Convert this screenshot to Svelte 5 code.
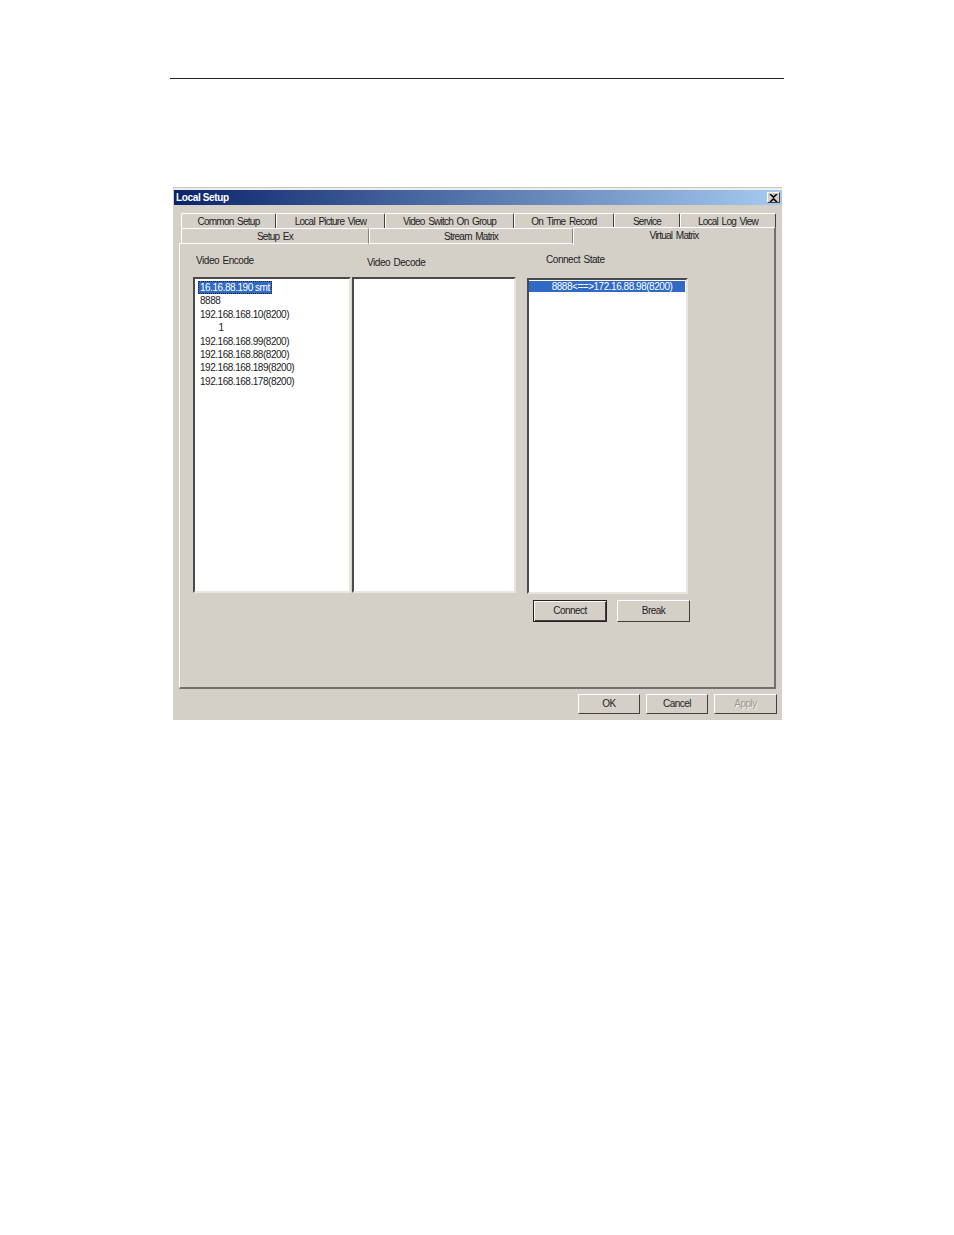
<script>
  const topTabs = [
    { label: "Common Setup", width: 95 },
    { label: "Local Picture View", width: 109 },
    { label: "Video Switch On Group", width: 129 },
    { label: "On Time Record", width: 100 },
    { label: "Service", width: 66 },
    { label: "Local Log View", width: 96 }
  ];
  const encoders = [
    "8888",
    "192.168.168.10(8200)",
    "        1",
    "192.168.168.99(8200)",
    "192.168.168.88(8200)",
    "192.168.168.189(8200)",
    "192.168.168.178(8200)"
  ];
</script>

<main class="page">
  <div class="rule"></div>

  <section class="dialog">
    <header class="titlebar">
      <span>Local Setup</span>
      <button class="close" aria-label="Close">
        <svg width="9" height="8" viewBox="0 0 9 8">
          <path d="M1 0 4.5 3.2 8 0M1 8 4.5 4.8 8 8" fill="none" stroke="#000" stroke-width="1.6" />
        </svg>
      </button>
    </header>

    <div class="tabs">
      <div class="tab-row">
        {#each topTabs as tab}
          <div class="tab" style="width: {tab.width}px">{tab.label}</div>
        {/each}
      </div>
      <div class="tab-row second">
        <div class="tab flat" style="width: 188px">Setup Ex</div>
        <div class="tab flat" style="width: 204px">Stream Matrix</div>
        <div class="tab active">Virtual Matrix</div>
      </div>
    </div>

    <div class="panel">
      <div class="lists">
        <div class="col encode">
          <div class="label">Video Encode</div>
          <div class="listbox">
            <div class="item"><span class="selected">16.16.88.190 smt</span></div>
            {#each encoders as name}
              <div class="item">{name}</div>
            {/each}
          </div>
        </div>
        <div class="col decode">
          <div class="label">Video Decode</div>
          <div class="listbox"></div>
        </div>
        <div class="col state">
          <div class="label">Connect State</div>
          <div class="listbox">
            <div class="state-row">8888&lt;==&gt;172.16.88.98(8200)</div>
          </div>
          <div class="actions">
            <button class="btn default">Connect</button>
            <button class="btn">Break</button>
          </div>
        </div>
      </div>
    </div>

    <footer class="footer">
      <button class="btn small">OK</button>
      <button class="btn small">Cancel</button>
      <button class="btn small disabled">Apply</button>
    </footer>
  </section>
</main>

<style>
  :global(body) {
    margin: 0;
    background: #fff;
  }
  .page {
    height: 1235px;
    padding-top: 78px;
    box-sizing: border-box;
    font-family: "Liberation Sans", Arial, sans-serif;
    font-size: 10px;
    letter-spacing: -0.47px;
    color: #222;
  }
  .rule {
    width: 614px;
    margin-left: 170px;
    border-top: 1px solid #222;
  }
  .dialog {
    width: 609px;
    height: 533px;
    margin: 108px 0 0 173px;
    background: #d4d0c8;
    border-top: 1px solid #c8c5bd;
    box-sizing: border-box;
    padding-top: 2px;
  }
  .titlebar {
    height: 15px;
    margin-left: 1px;
    padding: 0 2px 0 2px;
    display: flex;
    align-items: center;
    justify-content: space-between;
    background: linear-gradient(90deg, #0a246a, #a6caf0);
    box-shadow: 0 -2px 0 #eeede9;
    color: #fff;
    font-size: 10px;
    font-weight: bold;
    letter-spacing: -0.35px;
  }
  .close {
    width: 13px;
    height: 11px;
    padding: 0;
    display: flex;
    align-items: center;
    justify-content: center;
    background: #d4d0c8;
    border: 1px solid;
    border-color: #fff #404040 #404040 #fff;
  }
  .tabs {
    margin: 8px 0 0 8px;
    letter-spacing: -0.75px;
    word-spacing: 1.5px;
  }
  .tab-row {
    display: flex;
    height: 15px;
  }
  .tab-row.second {
    height: 16px;
  }
  .tab {
    box-sizing: border-box;
    display: flex;
    align-items: center;
    justify-content: center;
    background: #d4d0c8;
    border-top: 1px solid #fff;
    border-left: 1px solid #fff;
    border-right: 1px solid #404040;
    border-radius: 2px 2px 0 0;
  }
  .tab.flat {
    border-right-color: #808080;
    border-bottom: 1px solid #fff;
    padding-top: 1px;
  }
  .tab.active {
    width: 203px;
    height: 18px;
    margin-top: -1px;
    padding-bottom: 3px;
    position: relative;
    z-index: 1;
    border-right: 2px solid #707070;
  }
  .panel {
    width: 597px;
    height: 446px;
    margin-left: 6px;
    margin-top: -1px;
    box-sizing: border-box;
    border-top: 1px solid #fff;
    border-left: 1px solid #fff;
    border-right: 2px solid #707070;
    border-bottom: 2px solid #707070;
  }
  .lists {
    display: flex;
    align-items: flex-start;
    padding-left: 13px;
  }
  .label {
    height: 12px;
    line-height: 12px;
    letter-spacing: -0.45px;
    word-spacing: 1px;
  }
  .listbox {
    box-sizing: border-box;
    background: #fff;
    border: 2px solid;
    border-color: #4a4a4a #e8e6e0 #e8e6e0 #4a4a4a;
  }
  .encode {
    width: 159px;
    padding-top: 11px;
  }
  .encode .label {
    margin: 0 0 10px 3px;
  }
  .encode .listbox {
    width: 158px;
    height: 316px;
    padding-top: 2px;
  }
  .decode {
    width: 175px;
    padding-top: 13px;
  }
  .decode .label {
    margin: 0 0 8px 15px;
  }
  .decode .listbox {
    width: 164px;
    height: 316px;
  }
  .state {
    padding-top: 10px;
  }
  .state .label {
    margin: 0 0 12px 19px;
  }
  .state .listbox {
    width: 161px;
    height: 316px;
    padding: 1px 1px 0 0;
  }
  .item {
    height: 13.4px;
    line-height: 13.4px;
    padding-left: 5px;
    white-space: pre;
  }
  .selected {
    display: inline-block;
    height: 13px;
    margin-left: -2px;
    padding: 0 2px;
    background: #316ac5;
    color: #fff;
    outline: 1px dotted #222;
    outline-offset: -1px;
  }
  .state-row {
    height: 11px;
    line-height: 11px;
    padding-left: 10px;
    text-align: center;
    background: #316ac5;
    color: #fff;
  }
  .actions {
    display: flex;
    gap: 10px;
    margin: 6px 0 0 6px;
  }
  .btn {
    width: 73px;
    height: 22px;
    padding: 0 0 1px;
    box-sizing: border-box;
    font: inherit;
    letter-spacing: -0.55px;
    color: #222;
    background: #d4d0c8;
    border: 1px solid;
    border-color: #fff #404040 #404040 #fff;
  }
  .btn.default {
    width: 74px;
    border: 1px solid #222;
    box-shadow: inset 1px 1px 0 #fff, inset -1px -1px 0 #404040;
  }
  .btn.small {
    width: 62px;
    height: 20px;
  }
  .btn.disabled {
    width: 63px;
    color: #9a978f;
    text-shadow: 1px 1px 0 #f4f3f0;
  }
  .footer {
    display: flex;
    justify-content: flex-end;
    gap: 6px;
    width: 604px;
    margin-top: 5px;
  }
</style>
